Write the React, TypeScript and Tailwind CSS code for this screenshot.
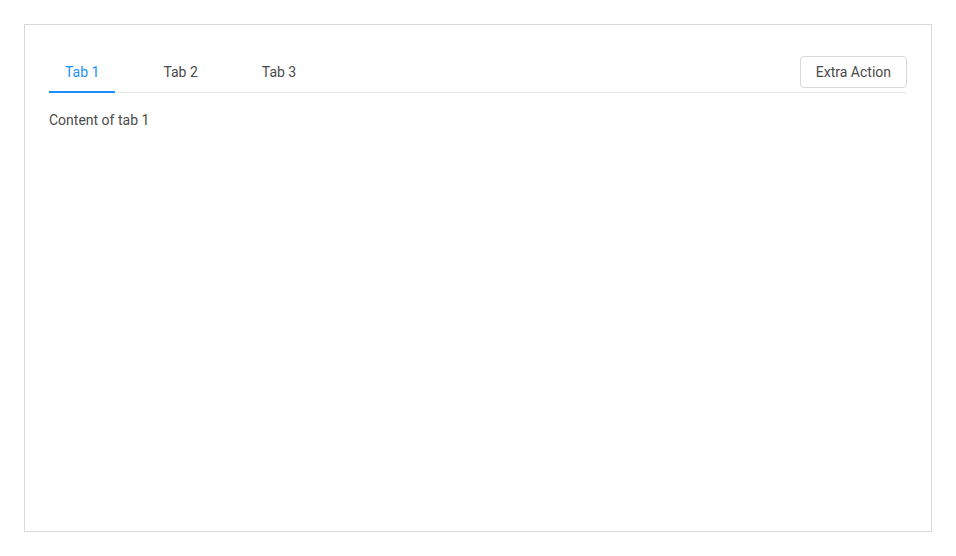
import { useState } from "react";

const tabs = [
    { key: "1", label: "Tab 1", content: "Content of tab 1" },
    { key: "2", label: "Tab 2", content: "Content of tab 2" },
    { key: "3", label: "Tab 3", content: "Content of tab 3" },
];

export default function App() {
    const [active, setActive] = useState("1");
    const current = tabs.find((t) => t.key === active);

    return (
        <div className="p-6 w-[956px] h-[556px] bg-white font-['Roboto',sans-serif] text-sm text-[#4a4a4a]">
            <div className="h-[508px] border border-[#d9d9d9] p-6">
                <div className="flex items-center justify-between h-[44px] pt-[3px] border-b border-[#e8e8e8]">
                    <div className="flex h-full gap-8">
                        {tabs.map((tab) => (
                            <button
                                key={tab.key}
                                onClick={() => setActive(tab.key)}
                                className={`relative h-full px-4 leading-[22px] ${
                                    active === tab.key ? "text-[#1890ff]" : "text-[#4a4a4a]"
                                }`}
                            >
                                {tab.label}
                                {active === tab.key && (
                                    <span className="absolute left-0 right-0 -bottom-px h-[2px] bg-[#1890ff]" />
                                )}
                            </button>
                        ))}
                    </div>
                    <button className="h-8 px-[15px] border border-[#d9d9d9] rounded-[4px] bg-white text-[#4a4a4a]">
                        Extra Action
                    </button>
                </div>
                <div className="mt-4 leading-[22px]">{current?.content}</div>
            </div>
        </div>
    );
}
